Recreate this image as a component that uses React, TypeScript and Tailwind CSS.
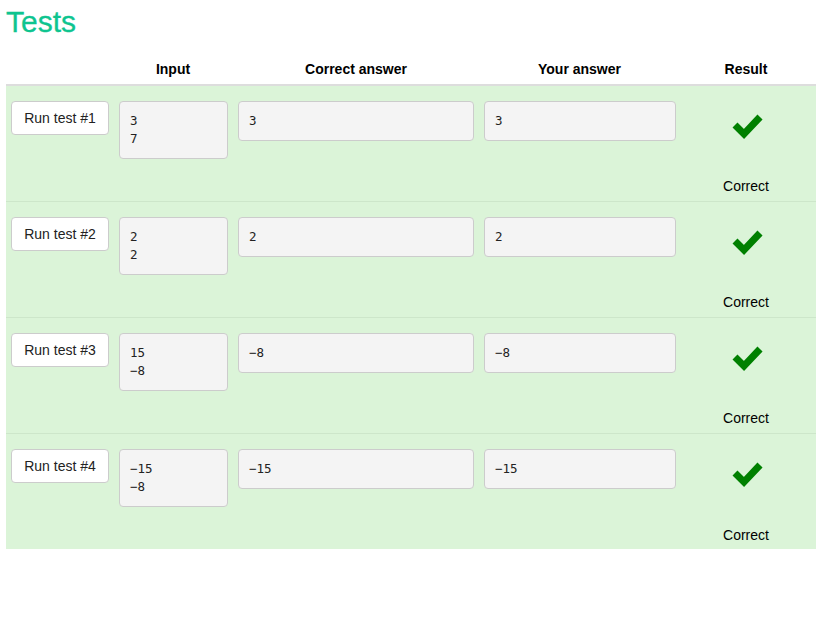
const tests = [
  { id: 1, input: ["3", "7"], correct: "3", yours: "3" },
  { id: 2, input: ["2", "2"], correct: "2", yours: "2" },
  { id: 3, input: ["15", "\u22128"], correct: "\u22128", yours: "\u22128" },
  { id: 4, input: ["\u221215", "\u22128"], correct: "\u221215", yours: "\u221215" },
];

const mono = "font-['DejaVu_Sans_Mono',Menlo,monospace] text-[12.5px] leading-[18px] text-[#222]";

function Check() {
  return (
    <svg width="32" height="27" viewBox="0 0 32 27" className="block ml-[3px]">
      <path d="M3 11 L12 20 L28 3" fill="none" stroke="#008000" strokeWidth="7" />
    </svg>
  );
}

export default function App() {
  return (
    <div className="bg-white min-h-screen px-[6px] font-['Liberation_Sans',Arial,sans-serif] text-black">
      <h1 className="text-[30px] leading-[34px] pt-[5px] text-[#0ec48f] [-webkit-text-stroke:0.3px_#0ec48f]">Tests</h1>
      <div className="mt-[15px] w-[810px]">
        <div className="flex h-[32px] items-center text-[14px] font-bold border-b-2 border-[#dddddd]">
          <div className="w-[107px]" />
          <div className="w-[120px] text-center">Input</div>
          <div className="w-[246px] text-center">Correct answer</div>
          <div className="w-[201px] text-center">Your answer</div>
          <div className="w-[132px] text-center">Result</div>
        </div>
        {tests.map((t, i) => (
          <div
            key={t.id}
            className={`flex bg-[#dbf4d8] ${i < tests.length - 1 ? "h-[116px] border-b border-[#cde6ca]" : "h-[115px]"}`}
          >
            <div className="w-[107px] pt-[15px] pl-[5px]">
              <button className="w-[98px] h-[34px] bg-white border border-[#cccccc] rounded-[4px] text-[14px] text-[#222]">
                Run test #{t.id}
              </button>
            </div>
            <div className="w-[120px] pt-[15px] pl-[6px]">
              <div className={`w-[109px] bg-[#f4f4f4] border border-[#cccccc] rounded-[4px] px-[10px] py-[10px] ${mono}`}>
                {t.input.map((l, j) => (
                  <div key={j}>{l}</div>
                ))}
              </div>
            </div>
            <div className="w-[246px] pt-[15px] pl-[5px]">
              <div className={`w-[236px] bg-[#f4f4f4] border border-[#cccccc] rounded-[4px] px-[10px] py-[10px] ${mono}`}>
                {t.correct}
              </div>
            </div>
            <div className="w-[201px] pt-[15px] pl-[5px]">
              <div className={`w-[192px] bg-[#f4f4f4] border border-[#cccccc] rounded-[4px] px-[10px] py-[10px] ${mono}`}>
                {t.yours}
              </div>
            </div>
            <div className={`w-[132px] flex flex-col items-center justify-between pt-[28px] ${i < tests.length - 1 ? "pb-[6px]" : "pb-[5px]"}`}>
              <Check />
              <div className="text-[14px] leading-[18px]">Correct</div>
            </div>
          </div>
        ))}
      </div>
    </div>
  );
}
